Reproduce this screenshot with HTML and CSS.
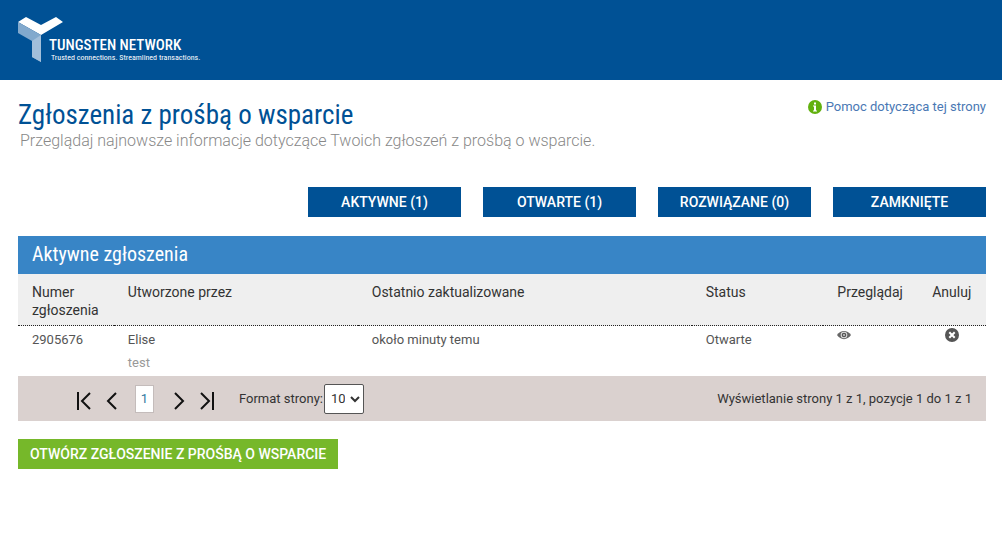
FILE: index.html
```html
<!DOCTYPE html>
<html lang="pl">
<head>
<meta charset="utf-8">
<meta name="viewport" content="width=device-width, initial-scale=1">
<title>Zgłoszenia z prośbą o wsparcie</title>
<link rel="stylesheet" href="styles.css">
</head>
<body>
<header class="site-header">
  <div class="brand">
    <svg class="brand-mark" viewBox="0 0 46 46" aria-hidden="true">
      <path fill="#fff" d="M0 5 8 0 23 8 38 0 45 5 23 18Z"/>
      <path fill="#82a9cd" d="M0 5 23 18V45L14 40V24L0 16Z"/>
      <path fill="#a3bfda" d="M14 24 23 18V45L14 40Z"/>
    </svg>
    <div class="brand-text">
      <span class="brand-name">TUNGSTEN NETWORK</span>
      <span class="brand-tagline">Trusted connections. Streamlined transactions.</span>
    </div>
  </div>
</header>
<main class="page">
  <div class="page-head">
    <div>
      <h1 class="page-title">Zgłoszenia z prośbą o wsparcie</h1>
      <p class="page-intro">Przeglądaj najnowsze informacje dotyczące Twoich zgłoszeń z prośbą o wsparcie.</p>
    </div>
    <a class="help-link" href="#">
      <svg class="help-icon" viewBox="0 0 14 14" aria-hidden="true">
        <circle cx="7" cy="7" r="7" fill="#62b10f"/>
        <path fill="#fff" d="M6 2.500h2v2H6zM5 5.500h3v5h1v1H5v-1h1v-4H5z"/>
      </svg>Pomoc dotycząca tej strony</a>
  </div>
  <nav class="filters">
    <button class="filter" type="button">AKTYWNE (1)</button>
    <button class="filter" type="button">OTWARTE (1)</button>
    <button class="filter" type="button">ROZWIĄZANE (0)</button>
    <button class="filter" type="button">ZAMKNIĘTE</button>
  </nav>
  <section>
    <h2 class="panel-title">Aktywne zgłoszenia</h2>
    <table class="tickets">
      <colgroup><col class="col-number"><col class="col-author"><col class="col-updated"><col class="col-status"><col class="col-view"><col class="col-cancel"></colgroup>
      <thead>
        <tr><th>Numer zgłoszenia</th><th>Utworzone przez</th><th>Ostatnio zaktualizowane</th><th>Status</th><th>Przeglądaj</th><th>Anuluj</th></tr>
      </thead>
      <tbody>
        <tr>
          <td>2905676</td>
          <td>Elise</td>
          <td>około minuty temu</td>
          <td>Otwarte</td>
          <td class="action"><button class="icon-button" type="button" aria-label="Przeglądaj"><svg class="icon" viewBox="0 0 14 14" aria-hidden="true"><path fill="#666" d="M0 7C3.500 1.500 10.500 1.500 14 7 10.500 12.500 3.500 12.500 0 7Z"/><circle cx="7" cy="7" r="3.300" fill="#ddd"/><circle cx="7" cy="7" r="2.300" fill="#555"/><circle cx="7" cy="7" r="1" fill="#ccc"/></svg></button></td>
          <td class="action action-cancel"><button class="icon-button" type="button" aria-label="Anuluj"><svg class="icon" viewBox="0 0 14 14" aria-hidden="true"><circle cx="7" cy="7" r="7" fill="#555"/><path d="M4.300 4.300 9.700 9.700M9.700 4.300 4.300 9.700" stroke="#fff" stroke-width="2"/></svg></button></td>
        </tr>
        <tr class="subject"><td></td><td colspan="5">test</td></tr>
      </tbody>
    </table>
    <div class="pager">
      <div class="pager-nav">
        <button class="pager-button" type="button" aria-label="Pierwsza strona"><svg class="pager-icon" viewBox="0 0 16 20" aria-hidden="true"><path d="M2 1V19M14 2 6 10l8 8"/></svg></button>
        <button class="pager-button" type="button" aria-label="Poprzednia strona"><svg class="pager-icon" viewBox="0 0 16 20" aria-hidden="true"><path d="M12 2 4 10l8 8"/></svg></button>
        <button class="pager-current" type="button" aria-current="page">1</button>
        <button class="pager-button" type="button" aria-label="Następna strona"><svg class="pager-icon" viewBox="0 0 16 20" aria-hidden="true"><path d="M4 2l8 8-8 8"/></svg></button>
        <button class="pager-button" type="button" aria-label="Ostatnia strona"><svg class="pager-icon" viewBox="0 0 16 20" aria-hidden="true"><path d="M14 1V19M2 2l8 8-8 8"/></svg></button>
      </div>
      <label class="size-label" for="page-size">Format strony:</label>
      <select class="size-select" id="page-size"><option>10</option><option>20</option><option>50</option></select>
      <span class="pager-info">Wyświetlanie strony 1 z 1, pozycje 1 do 1 z 1</span>
    </div>
  </section>
  <button class="open-ticket" type="button">OTWÓRZ ZGŁOSZENIE Z PROŚBĄ O WSPARCIE</button>
</main>
</body>
</html>
```
FILE: styles.css
```css
* { box-sizing: border-box; }
body { margin: 0; background: #fff; color: #555; font: 13px/18px Roboto, "Open Sans", sans-serif; }
button, select { font: inherit; border: 0; margin: 0; padding: 0; cursor: pointer; }
svg { display: block; }

.site-header { background: #005195; padding: 17px 18px; }
.brand { display: flex; height: 46px; }
.brand-mark { width: 46px; height: 46px; }
.brand-text { display: flex; flex-direction: column; justify-content: flex-end; margin-left: -15px; color: #fff; white-space: nowrap; }
.brand-name { font: 500 15px/15px "Roboto Condensed", "Open Sans", sans-serif; }
.brand-tagline { padding-left: 2px; font: 400 8px/10px "Roboto Condensed", "Open Sans", sans-serif; }

.page { padding: 18px 16px 18px 18px; }
.page-head { display: flex; justify-content: space-between; align-items: flex-start; }
.page-title { margin: 0; color: #005195; font: 400 27px/34px "Roboto Condensed", Roboto, sans-serif; }
.page-intro { margin: 0 2px; color: #888; font-weight: 300; font-size: 16px; line-height: 18px; }
.help-link { display: flex; gap: 4px; color: #4a78b4; text-decoration: none; }
.help-icon { width: 14px; height: 14px; margin-top: 2px; }

.filters { display: flex; flex-wrap: wrap; justify-content: flex-end; gap: 22px; margin: 37px 0 19px; }
.filter { width: 153px; height: 30px; background: #005195; color: #fff; font-weight: 500; font-size: 14px; }

.panel-title { margin: 0; padding: 3px 14px 5px; background: #3885c6; color: #fff; font: 400 20px/30px "Roboto Condensed", Roboto, sans-serif; }
.tickets { width: 100%; table-layout: fixed; border-collapse: collapse; }
.col-number { width: 9.9%; }
.col-author { width: 25.2%; }
.col-updated { width: 34.5%; }
.col-status { width: 13.6%; }
.col-view { width: 9.8%; }
.col-cancel { width: 7%; }
.tickets th { padding: 9px 12px 6px 14px; border-bottom: 1px dotted #222; background: #efefef; color: #333; font-weight: 400; font-size: 14px; line-height: 18px; text-align: left; vertical-align: top; }
.tickets td { padding: 5px 14px 0; vertical-align: top; }
.tickets .action { padding-top: 2px; }
.tickets .action-cancel { padding-left: 27px; }
.tickets .subject td { padding-bottom: 4px; color: #999; }
.icon-button { background: none; }
.icon { width: 14px; height: 14px; }

.pager { display: flex; align-items: center; flex-wrap: wrap; min-height: 45px; padding: 0 14px 0 58px; background: #dad1cf; color: #333; }
.pager-nav { display: flex; align-items: center; gap: 12px; padding-top: 4px; }
.pager-button { background: none; }
.pager-icon { width: 16px; height: 20px; fill: none; stroke: #111; stroke-width: 2; }
.pager-current { width: 19px; height: 28px; margin: 0 5px 4px 3px; border: 1px solid #c4bcbb; background: #fff; color: #2f789f; }
.size-label { margin: 0 1px 0 24px; }
.size-select { width: 40px; height: 30px; padding: 0 2px; border: 1px solid #555; border-radius: 2px; background: #fff; color: #333; }
.pager-info { margin-left: auto; }

.open-ticket { height: 30px; margin-top: 18px; padding: 0 12px; background: #76b82a; color: #fff; font-weight: 500; font-size: 14px; }
```
